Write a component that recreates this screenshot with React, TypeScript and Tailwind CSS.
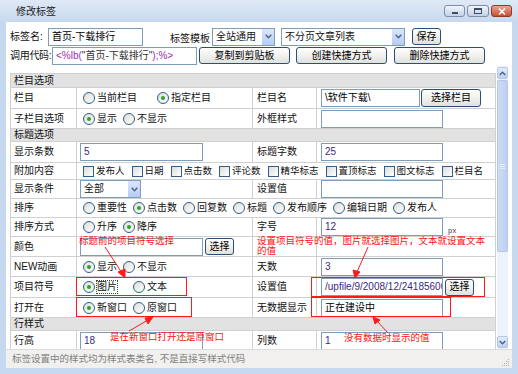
import React from "react";

const FONT = "font-['Liberation_Sans','Noto_Sans_CJK_SC',sans-serif]";

function TextBox({ value = "", className = "", tone = "text-black" }: { value?: string; className?: string; tone?: string }) {
  return (
    <div
      className={`h-[18px] shrink-0 border border-[#7f9db9] bg-white overflow-hidden whitespace-nowrap pl-[3px] text-[10px] leading-[16px] ${tone} ${className}`}
    >
      {value}
    </div>
  );
}

function Btn({ label, className = "" }: { label: string; className?: string }) {
  return (
    <div
      className={`h-[17px] shrink-0 border border-[#2c4f78] rounded-[3px] bg-linear-to-b from-white to-[#e2e2dc] flex items-center justify-center text-[10px] text-black whitespace-nowrap ${className}`}
    >
      {label}
    </div>
  );
}

function Select({ label, className = "" }: { label: string; className?: string }) {
  return (
    <div className={`h-[18px] shrink-0 border border-[#7f9db9] bg-white flex items-center ${className}`}>
      <span className="flex-1 pl-[3px] text-[10px] whitespace-nowrap">{label}</span>
      <span className="w-[13px] h-full bg-linear-to-b from-[#dbe6fb] to-[#b7cbf4] border-l border-white flex items-center justify-center">
        <svg width="7" height="5" viewBox="0 0 7 5">
          <path d="M0.7 0.8 L3.5 3.7 L6.3 0.8" stroke="#4d6185" strokeWidth="1.4" fill="none" />
        </svg>
      </span>
    </div>
  );
}

function Radio({ label, checked = false, className = "", focus = false }: { label: string; checked?: boolean; className?: string; focus?: boolean }) {
  return (
    <span className={`flex items-center gap-[2px] whitespace-nowrap ${className}`}>
      <span className="w-[12px] h-[12px] shrink-0 rounded-full border border-[#2f5f8e] bg-linear-to-br from-[#dcdcd7] to-white flex items-center justify-center">
        {checked && <span className="w-[4px] h-[4px] rounded-full bg-[#25a825]" />}
      </span>
      <span className={focus ? "outline-1 outline-dotted outline-[#444]" : ""}>{label}</span>
    </span>
  );
}

function Check({ label, className = "" }: { label: string; className?: string }) {
  return (
    <span className={`flex items-center gap-[2px] whitespace-nowrap ${className}`}>
      <span className="w-[11px] h-[11px] shrink-0 border border-[#2f5f8e] bg-linear-to-br from-[#dcdcd7] to-white" />
      <span className="text-[9.5px]">{label}</span>
    </span>
  );
}

const cell = "border border-[#d0d0d0] p-0 align-middle whitespace-nowrap";
const lab1 = `${cell} pl-[3px]`;
const lab3 = `${cell} pl-[4px]`;

function Header({ label, h }: { label: string; h: string }) {
  return (
    <tr className={h}>
      <td colSpan={4} className={`${cell} pl-[3px] bg-[#e2e2e2]`}>
        {label}
      </td>
    </tr>
  );
}

export default function App() {
  return (
    <div className={`relative w-[518px] h-[374px] overflow-hidden bg-[#c6d8ef] text-[#111] ${FONT}`}>
      {/* title bar */}
      <div className="h-[22px] bg-linear-to-b from-[#dfe9f6] to-[#c8d9ef] flex items-center pl-[16px] pr-[6px]">
        <span className="text-[10px] text-[#1b1b1b] flex-1">修改标签</span>
        <div className="flex gap-[2px] items-center">
          <div className="w-[21px] h-[12px] rounded-[3px] border border-[#7d8da6] bg-linear-to-b from-[#f1f5fb] to-[#c3d1e6] flex items-end justify-center pb-[2px]">
            <span className="w-[6px] h-[2px] bg-[#3d4d66]" />
          </div>
          <div className="w-[22px] h-[12px] rounded-[3px] border border-[#7d8da6] bg-linear-to-b from-[#f1f5fb] to-[#c3d1e6] flex items-center justify-center">
            <span className="w-[8px] h-[6px] border border-[#3d4d66] border-t-2" />
          </div>
          <div className="w-[21px] h-[12px] rounded-[3px] border border-[#8a3b2c] bg-linear-to-b from-[#eba694] to-[#c74a2f] flex items-center justify-center">
            <svg width="8" height="7" viewBox="0 0 8 7">
              <path d="M1 0.5 L7 6.5 M7 0.5 L1 6.5" stroke="white" strokeWidth="1.6" />
            </svg>
          </div>
        </div>
      </div>

      <div className="flex">
        <div className="w-[6px]" />
        <div className="w-[506px] bg-white flex flex-col">
          {/* top form */}
          <div className="h-[44px] pl-[4px] pt-[5px] text-[10px] whitespace-nowrap">
            <div className="flex items-center h-[19px]">
              <span className="w-[38px] shrink-0">标签名:</span>
              <TextBox value="首页-下载排行" className="w-[95px] h-[17px] leading-[15px]" />
              <span className="ml-[27px] w-[42px] shrink-0 pt-[4px]">标签模板</span>
              <Select label="全站通用" className="w-[63px]" />
              <Select label="不分页文章列表" className="ml-[6px] w-[124px]" />
              <Btn label="保存" className="ml-[7px] w-[29px]" />
            </div>
            <div className="flex items-center h-[19px]">
              <span className="w-[42px] shrink-0 tracking-[-0.3px]">调用代码:</span>
              <div className="w-[145px] shrink-0 h-[18px] border border-[#7f9db9] pl-[3px] text-[10px] leading-[16px] whitespace-nowrap overflow-hidden">
                <span className="text-[#9b2fb0]">&lt;%lb(</span>
                <span className="text-[#333]">"首页-下载排行"</span>
                <span className="text-[#9b2fb0]">);%&gt;</span>
              </div>
              <Btn label="复制到剪贴板" className="ml-[2px] w-[91px]" />
              <Btn label="创建快捷方式" className="ml-[6px] w-[91px]" />
              <Btn label="删除快捷方式" className="ml-[7px] w-[91px]" />
            </div>
          </div>

          {/* scrolling table area */}
          <div className="flex h-[283px]">
            <div className="w-[491px] pl-[4px] pt-[7px] overflow-hidden">
              <table className="table-fixed border-collapse w-[485px] text-[10px] leading-[12px]">
                <colgroup>
                  <col className="w-[66px]" />
                  <col className="w-[176px]" />
                  <col className="w-[64px]" />
                  <col className="w-[179px]" />
                </colgroup>
                <tbody>
                  <Header label="栏目选项" h="h-[14px]" />
                  <tr className="h-[21px]">
                    <td className={lab1}>栏目</td>
                    <td className={`${cell} pl-[6px]`}>
                      <div className="flex items-center">
                        <Radio label="当前栏目" />
                        <Radio label="指定栏目" checked className="ml-[20px]" />
                      </div>
                    </td>
                    <td className={lab3}>栏目名</td>
                    <td className={`${cell} pl-[4px]`}>
                      <div className="flex items-center">
                        <TextBox value="\软件下载\" className="w-[99px]" />
                        <Btn label="选择栏目" className="ml-[1px] w-[60px] h-[18px]" />
                      </div>
                    </td>
                  </tr>
                  <tr className="h-[20px]">
                    <td className={lab1}>子栏目选项</td>
                    <td className={`${cell} pl-[6px]`}>
                      <div className="flex items-center">
                        <Radio label="显示" checked />
                        <Radio label="不显示" className="ml-[6px]" />
                      </div>
                    </td>
                    <td className={lab3}>外框样式</td>
                    <td className={`${cell} pl-[4px]`}>
                      <TextBox className="w-[122px]" />
                    </td>
                  </tr>
                  <Header label="标题选项" h="h-[13px]" />
                  <tr className="h-[21px]">
                    <td className={lab1}>显示条数</td>
                    <td className={`${cell} pl-[3px]`}>
                      <TextBox value="5" tone="text-[#3a2a80]" className="w-[123px]" />
                    </td>
                    <td className={lab3}>标题字数</td>
                    <td className={`${cell} pl-[4px]`}>
                      <TextBox value="25" tone="text-[#3a2a80]" className="w-[122px]" />
                    </td>
                  </tr>
                  <tr className="h-[17px]">
                    <td className={lab1}>附加内容</td>
                    <td colSpan={3} className={`${cell} pl-[6px]`}>
                      <div className="flex items-center gap-[7px]">
                        <Check label="发布人" />
                        <Check label="日期" />
                        <Check label="点击数" />
                        <Check label="评论数" />
                        <Check label="精华标志" />
                        <Check label="置顶标志" />
                        <Check label="图文标志" />
                        <Check label="栏目名" />
                      </div>
                    </td>
                  </tr>
                  <tr className="h-[19px]">
                    <td className={lab1}>显示条件</td>
                    <td className={`${cell} pl-[3px]`}>
                      <Select label="全部" className="w-[61px] h-[17px]" />
                    </td>
                    <td className={lab3}>设置值</td>
                    <td className={`${cell} pl-[4px]`}>
                      <TextBox className="w-[122px]" />
                    </td>
                  </tr>
                  <tr className="h-[19px]">
                    <td className={lab1}>排序</td>
                    <td colSpan={3} className={`${cell} pl-[6px]`}>
                      <div className="flex items-center gap-[6px]">
                        <Radio label="重要性" />
                        <Radio label="点击数" checked />
                        <Radio label="回复数" />
                        <Radio label="标题" />
                        <Radio label="发布顺序" />
                        <Radio label="编辑日期" />
                        <Radio label="发布人" />
                      </div>
                    </td>
                  </tr>
                  <tr className="h-[19px]">
                    <td className={lab1}>排序方式</td>
                    <td className={`${cell} pl-[6px]`}>
                      <div className="flex items-center">
                        <Radio label="升序" />
                        <Radio label="降序" checked className="ml-[6px]" />
                      </div>
                    </td>
                    <td className={lab3}>字号</td>
                    <td className={`${cell} pl-[4px]`}>
                      <div className="flex items-center">
                        <TextBox value="12" tone="text-[#3a2a80]" className="w-[122px] h-[17px] leading-[15px]" />
                        <span className="ml-[5px] mt-[8px] text-[7px] leading-[7px] font-['Liberation_Mono',monospace] text-[#333]">px</span>
                      </div>
                    </td>
                  </tr>
                  <tr className="h-[20px]">
                    <td className={lab1}>颜色</td>
                    <td className={`${cell} pl-[3px]`}>
                      <div className="flex items-center">
                        <TextBox className="w-[123px]" />
                        <Btn label="选择" className="ml-[2px] w-[29px]" />
                      </div>
                    </td>
                    <td className={lab3}></td>
                    <td className={cell}></td>
                  </tr>
                  <tr className="h-[20px]">
                    <td className={lab1}>NEW动画</td>
                    <td className={`${cell} pl-[6px]`}>
                      <div className="flex items-center">
                        <Radio label="显示" checked />
                        <Radio label="不显示" className="ml-[6px]" />
                      </div>
                    </td>
                    <td className={lab3}>天数</td>
                    <td className={`${cell} pl-[4px]`}>
                      <TextBox value="3" tone="text-[#3a2a80]" className="w-[122px]" />
                    </td>
                  </tr>
                  <tr className="h-[21px]">
                    <td className={lab1}>项目符号</td>
                    <td className={`${cell} pl-[6px]`}>
                      <div className="flex items-center">
                        <Radio label="图片" checked focus />
                        <Radio label="文本" className="ml-[16px]" />
                      </div>
                    </td>
                    <td className={lab3}>设置值</td>
                    <td className={`${cell} pl-[4px]`}>
                      <div className="flex items-center">
                        <TextBox value="/upfile/9/2008/12/24185600" tone="text-[#3a2a80]" className="w-[122px]" />
                        <Btn label="选择" className="ml-[2px] w-[29px]" />
                      </div>
                    </td>
                  </tr>
                  <tr className="h-[20px]">
                    <td className={lab1}>打开在</td>
                    <td className={`${cell} pl-[6px]`}>
                      <div className="flex items-center">
                        <Radio label="新窗口" checked />
                        <Radio label="原窗口" className="ml-[6px]" />
                      </div>
                    </td>
                    <td className={lab3}>无数据显示</td>
                    <td className={`${cell} pl-[4px]`}>
                      <TextBox value="正在建设中" className="w-[122px]" />
                    </td>
                  </tr>
                  <Header label="行样式" h="h-[13px]" />
                  <tr className="h-[20px]">
                    <td className={lab1}>行高</td>
                    <td className={`${cell} pl-[3px]`}>
                      <TextBox value="18" tone="text-[#3a2a80]" className="w-[123px]" />
                    </td>
                    <td className={lab3}>列数</td>
                    <td className={`${cell} pl-[4px]`}>
                      <TextBox value="1" tone="text-[#3a2a80]" className="w-[122px]" />
                    </td>
                  </tr>
                </tbody>
              </table>
            </div>
            {/* scrollbar */}
            <div className="w-[11px] flex flex-col pt-[1px] pb-[1px] bg-[#eef3fb]">
              <div className="h-[12px] rounded-[2px] border border-[#b3c7ea] bg-linear-to-b from-[#e4ecfb] to-[#bccff3] flex items-center justify-center">
                <svg width="7" height="5" viewBox="0 0 7 5">
                  <path d="M0.7 4 L3.5 1.2 L6.3 4" stroke="#4d6185" strokeWidth="1.4" fill="none" />
                </svg>
              </div>
              <div className="mt-[1px] h-[172px] rounded-[2px] border border-[#b3c7ea] bg-linear-to-r from-[#cddcf6] to-[#bcd0f3] flex items-center justify-center">
                <div className="flex flex-col gap-[1px]">
                  <span className="w-[5px] h-[1px] bg-[#e8eefa]" />
                  <span className="w-[5px] h-[1px] bg-[#e8eefa]" />
                  <span className="w-[5px] h-[1px] bg-[#e8eefa]" />
                </div>
              </div>
              <div className="flex-1" />
              <div className="h-[12px] rounded-[2px] border border-[#b3c7ea] bg-linear-to-b from-[#e4ecfb] to-[#bccff3] flex items-center justify-center">
                <svg width="7" height="5" viewBox="0 0 7 5">
                  <path d="M0.7 1 L3.5 3.8 L6.3 1" stroke="#4d6185" strokeWidth="1.4" fill="none" />
                </svg>
              </div>
            </div>
            <div className="w-[4px]" />
          </div>

          {/* status bar */}
          <div className="h-[19px] border-t border-[#dcdcdc] bg-[#f1f0ee] flex items-center pl-[6px] pr-[2px]">
            <span className="flex-1 text-[9.5px] text-[#808080] whitespace-nowrap">
              标签设置中的样式均为样式表类名, 不是直接写样式代码
            </span>
            <svg width="10" height="10" viewBox="0 0 10 10" className="self-end mb-[1px]">
              <g fill="#b0b0b0">
                <rect x="8" y="2" width="1" height="1" />
                <rect x="6" y="4" width="1" height="1" />
                <rect x="8" y="4" width="1" height="1" />
                <rect x="4" y="6" width="1" height="1" />
                <rect x="6" y="6" width="1" height="1" />
                <rect x="8" y="6" width="1" height="1" />
                <rect x="2" y="8" width="1" height="1" />
                <rect x="4" y="8" width="1" height="1" />
                <rect x="6" y="8" width="1" height="1" />
                <rect x="8" y="8" width="1" height="1" />
              </g>
            </svg>
          </div>
        </div>
      </div>

      {/* annotations */}
      <div className="absolute left-[76px] top-[277px] w-[111px] h-[19px] border border-[#ff1a1a]" />
      <div className="absolute left-[76px] top-[297px] w-[116px] h-[20px] border border-[#ff1a1a]" />
      <div className="absolute left-[311px] top-[277px] w-[174px] h-[20px] border border-[#ff1a1a]" />
      <div className="absolute left-[311px] top-[297px] w-[140px] h-[20px] border border-[#ff1a1a]" />

      <div className="absolute left-[79px] top-[235px] text-[9.5px] leading-[11px] text-[#ff1010] whitespace-nowrap">
        标题前的项目符号选择
      </div>
      <div className="absolute left-[257px] top-[236px] text-[9.5px] leading-[10px] text-[#ff1010] whitespace-nowrap">
        设置项目符号的值，图片就选择图片，文本就设置文本
        <br />
        的值
      </div>
      <div className="absolute left-[110px] top-[331px] text-[9.5px] leading-[11px] text-[#ff1010] whitespace-nowrap">
        是在新窗口打开还是原窗口
      </div>
      <div className="absolute left-[344px] top-[332px] text-[9.5px] leading-[11px] text-[#ff1010] whitespace-nowrap">
        没有数据时显示的值
      </div>

      <svg className="absolute left-0 top-0 pointer-events-none" width="518" height="374" viewBox="0 0 518 374">
        <g stroke="#ff1a1a" strokeWidth="1" fill="#ff1a1a">
          <line x1="105" y1="247" x2="122" y2="273" />
          <polygon points="125,278 118,272 125,269" />
          <line x1="368" y1="247" x2="357" y2="272" />
          <polygon points="355,278 353,270 360,272" />
          <line x1="129" y1="331" x2="148" y2="320" />
          <polygon points="153,317 148,324 145,318" />
          <line x1="388" y1="333" x2="377" y2="321" />
          <polygon points="373,317 380,320 375,324" />
        </g>
      </svg>
    </div>
  );
}
